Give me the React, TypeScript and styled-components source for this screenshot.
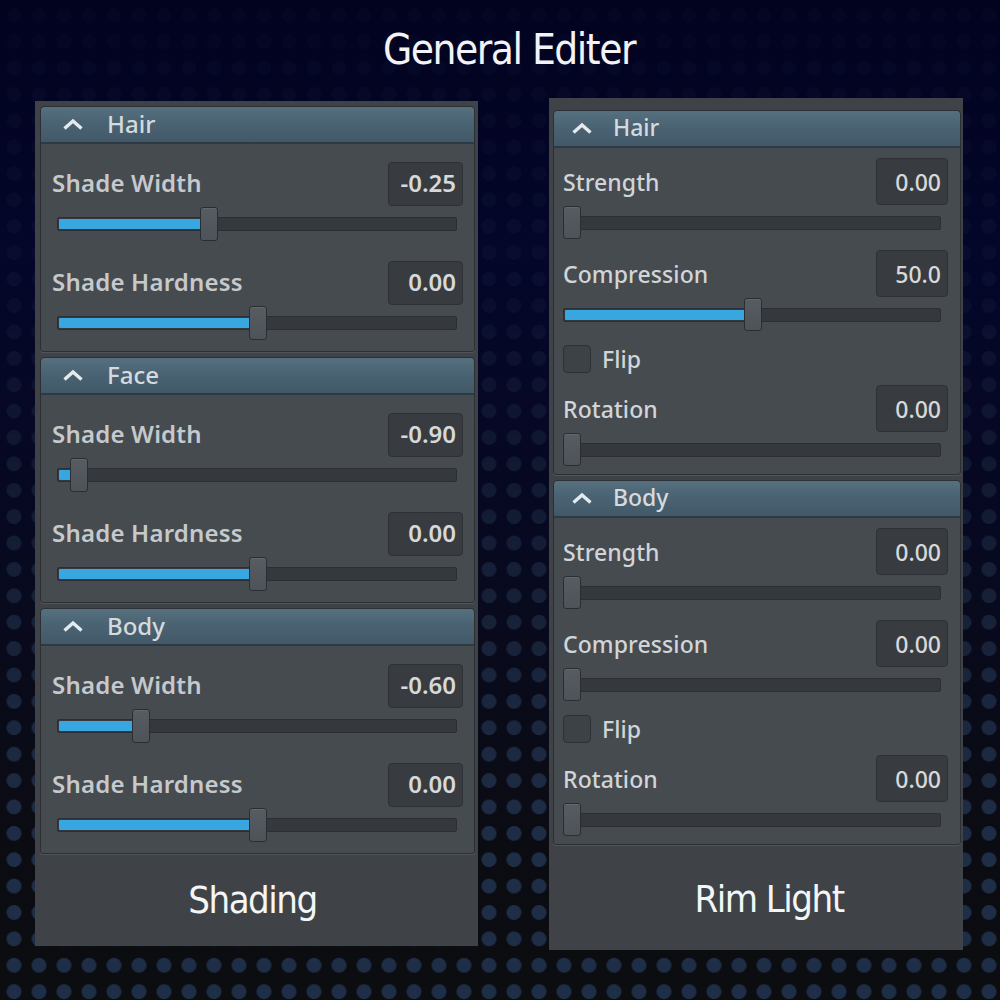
import React from "react";
import styled, { createGlobalStyle } from "styled-components";

const GlobalStyle = createGlobalStyle`
	html, body {
		margin: 0;
		padding: 0;
		background: #05061a;
	}
	* {
		box-sizing: border-box;
	}
`;

type SliderRow = { kind: "slider"; label: string; value: string; pct: number; fill: boolean };
type CheckRow = { kind: "check"; label: string };
type Row = SliderRow | CheckRow;
type Section = { title: string; rows: Row[] };

const shading: Section[] = [
	{
		title: "Hair",
		rows: [
			{ kind: "slider", label: "Shade Width", value: "-0.25", pct: 37.4, fill: true },
			{ kind: "slider", label: "Shade Hardness", value: "0.00", pct: 50.3, fill: true },
		],
	},
	{
		title: "Face",
		rows: [
			{ kind: "slider", label: "Shade Width", value: "-0.90", pct: 3.4, fill: true },
			{ kind: "slider", label: "Shade Hardness", value: "0.00", pct: 50.3, fill: true },
		],
	},
	{
		title: "Body",
		rows: [
			{ kind: "slider", label: "Shade Width", value: "-0.60", pct: 19.6, fill: true },
			{ kind: "slider", label: "Shade Hardness", value: "0.00", pct: 50.3, fill: true },
		],
	},
];

const rimLight: Section[] = [
	{
		title: "Hair",
		rows: [
			{ kind: "slider", label: "Strength", value: "0.00", pct: 0, fill: false },
			{ kind: "slider", label: "Compression", value: "50.0", pct: 50.4, fill: true },
			{ kind: "check", label: "Flip" },
			{ kind: "slider", label: "Rotation", value: "0.00", pct: 0, fill: false },
		],
	},
	{
		title: "Body",
		rows: [
			{ kind: "slider", label: "Strength", value: "0.00", pct: 0, fill: false },
			{ kind: "slider", label: "Compression", value: "0.00", pct: 0, fill: false },
			{ kind: "check", label: "Flip" },
			{ kind: "slider", label: "Rotation", value: "0.00", pct: 0, fill: false },
		],
	},
];

const Chevron = () => (
	<svg width="24" height="13" viewBox="0 0 24 13">
		<path d="M3.5 10.5 L12 3 L20.5 10.5" fill="none" stroke="#e6eaed" strokeWidth="3.4" strokeLinejoin="miter" />
	</svg>
);

interface Variant {
	$wide: boolean;
}

const SliderControl: React.FC<{ row: SliderRow; wide: boolean }> = ({ row, wide }) => (
	<RowBlock>
		<LabelLine>
			<Label $wide={wide}>{row.label}</Label>
			<ValueBox $wide={wide}>{row.value}</ValueBox>
		</LabelLine>
		<SliderArea $wide={wide}>
			<Track>
				{row.fill && <Fill style={{ width: `calc(${row.pct / 100} * (100% - 18px) + 4px)` }} />}
			</Track>
			<Handle style={{ left: `calc(${row.pct / 100} * (100% - 18px))` }} />
		</SliderArea>
	</RowBlock>
);

const PanelView: React.FC<{ sections: Section[]; footer: string; wide: boolean }> = ({ sections, footer, wide }) => (
	<Panel $wide={wide}>
		{sections.map((s, i) => (
			<Group key={i}>
				<Header $wide={wide}>
					<Chevron />
					<HeaderTitle $wide={wide}>{s.title}</HeaderTitle>
				</Header>
				<Body $wide={wide}>
					{s.rows.map((r, j) =>
						r.kind === "slider" ? (
							<SliderControl key={j} row={r} wide={wide} />
						) : (
							<CheckLine key={j}>
								<CheckBox />
								<Label $wide={wide}>{r.label}</Label>
							</CheckLine>
						)
					)}
				</Body>
			</Group>
		))}
		<Footer $wide={wide}>{footer}</Footer>
	</Panel>
);

export default function App() {
	return (
		<Page>
			<GlobalStyle />
			<Title>General Editer</Title>
			<Columns>
				<PanelView sections={shading} footer="Shading" wide={true} />
				<PanelView sections={rimLight} footer="Rim Light" wide={false} />
			</Columns>
		</Page>
	);
}

const Page = styled.div`
	position: relative;
	width: 1000px;
	height: 1000px;
	overflow: hidden;
	background: linear-gradient(180deg, #02031f 0%, #04062a 25%, #070920 55%, #0b0c12 85%, #0c0d10 100%);

	&::before {
		content: "";
		position: absolute;
		inset: 0;
		background-image: radial-gradient(circle, #1f2e47 7px, transparent 7.8px);
		background-size: 25px 26.4px;
		background-position: 1.5px 2px;
		-webkit-mask-image: linear-gradient(180deg, rgba(0, 0, 0, 0.08) 0%, rgba(0, 0, 0, 0.2) 30%, rgba(0, 0, 0, 0.65) 60%, #000 85%);
		mask-image: linear-gradient(180deg, rgba(0, 0, 0, 0.08) 0%, rgba(0, 0, 0, 0.2) 30%, rgba(0, 0, 0, 0.65) 60%, #000 85%);
	}
`;

const Title = styled.div`
	position: relative;
	height: 98px;
	display: flex;
	align-items: center;
	justify-content: center;
	padding-left: 18px;
	color: #f2f3f6;
	font-family: "DejaVu Sans Condensed", "DejaVu Sans", Roboto, sans-serif;
	font-size: 42px;
	font-weight: 400;
	letter-spacing: -1.5px;
`;

const Columns = styled.div`
	position: relative;
	display: flex;
	align-items: flex-start;
	gap: 71px;
	padding-left: 35px;
`;

const Panel = styled.div<Variant>`
	display: flex;
	flex-direction: column;
	width: ${(p) => (p.$wide ? "443px" : "414px")};
	height: ${(p) => (p.$wide ? "845px" : "852px")};
	margin-top: ${(p) => (p.$wide ? "3px" : "0")};
	padding: ${(p) => (p.$wide ? "5px 3px 0 5px" : "12px 2px 0 4px")};
	background: #3f4347;
`;

const Group = styled.div`
	display: flex;
	flex-direction: column;
	margin-bottom: 5px;
	border: 1px solid #2c3034;
	border-radius: 4px 4px 3px 3px;
	background: #464b50;
	box-shadow: 0 1px 0 #4f5459;
`;

const Header = styled.div<Variant>`
	display: flex;
	align-items: center;
	gap: ${(p) => (p.$wide ? "22px" : "19px")};
	height: 37px;
	padding-left: ${(p) => (p.$wide ? "20px" : "16px")};
	border-radius: 4px 4px 0 0;
	background: linear-gradient(180deg, #56707f 0%, #4a6373 45%, #415868 100%);
	border-bottom: 2px solid #2e3a43;
`;

const HeaderTitle = styled.span<Variant>`
	font-family: "Noto Sans", "Open Sans", sans-serif;
	font-size: ${(p) => (p.$wide ? "24px" : "23px")};
	font-weight: 500;
	color: #d6dadd;
	line-height: 1;
	padding-bottom: 2px;
`;

const Body = styled.div<Variant>`
	display: flex;
	flex-direction: column;
	gap: ${(p) => (p.$wide ? "20px" : "11px")};
	padding: ${(p) => (p.$wide ? "18px 11px 11px 11px" : "10px 12px 8px 9px")};
`;

const RowBlock = styled.div`
	display: flex;
	flex-direction: column;
	gap: 1px;
`;

const LabelLine = styled.div`
	display: flex;
	align-items: center;
	justify-content: space-between;
`;

const Label = styled.span<Variant>`
	font-family: "Noto Sans", "Open Sans", sans-serif;
	font-size: ${(p) => (p.$wide ? "24px" : "23px")};
	font-weight: ${(p) => (p.$wide ? 600 : 500)};
	color: ${(p) => (p.$wide ? "#c6c9cc" : "#d2d5d8")};
	letter-spacing: ${(p) => (p.$wide ? "0.2px" : "0.1px")};
	margin-bottom: ${(p) => (p.$wide ? "3px" : "0")};
`;

const ValueBox = styled.div<Variant>`
	width: ${(p) => (p.$wide ? "75px" : "72px")};
	height: ${(p) => (p.$wide ? "44px" : "47px")};
	display: flex;
	align-items: center;
	justify-content: flex-end;
	padding: ${(p) => (p.$wide ? "0 6px 4px 0" : "0 6px 0 0")};
	border: 1px solid #2d3135;
	border-radius: 4px;
	background: #383c40;
	font-family: "Noto Sans", "Open Sans", sans-serif;
	font-size: ${(p) => (p.$wide ? "24px" : "23px")};
	font-weight: ${(p) => (p.$wide ? 600 : 500)};
	color: #d6d8da;
`;

const SliderArea = styled.div<Variant>`
	position: relative;
	height: ${(p) => (p.$wide ? "34px" : "33px")};
	margin: ${(p) => (p.$wide ? "0 6px 0 5px" : "0 7px 0 0")};
	display: flex;
	align-items: center;
`;

const Track = styled.div`
	position: relative;
	width: 100%;
	height: 14px;
	border: 1px solid #2b2e32;
	border-radius: 2px;
	background: #35393d;
	overflow: hidden;
`;

const Fill = styled.div`
	position: absolute;
	left: 1px;
	top: 1px;
	bottom: 1px;
	background: #38a7e0;
	border-radius: 1px;
`;

const Handle = styled.div`
	position: absolute;
	top: 0;
	width: 18px;
	height: 100%;
	border: 1px solid #2a2e32;
	border-radius: 3px;
	background: linear-gradient(180deg, #565c62 0%, #4d5359 100%);
	box-shadow: inset 0 1px 0 #62686e;
`;

const CheckLine = styled.div`
	display: flex;
	align-items: center;
	gap: 11px;
	height: 29px;
	margin: 2px 0 1px;
`;

const CheckBox = styled.div`
	width: 28px;
	height: 28px;
	border: 1px solid #2d3135;
	border-radius: 4px;
	background: #3d4246;
`;

const Footer = styled.div<Variant>`
	flex: 1;
	display: flex;
	align-items: center;
	justify-content: center;
	padding: ${(p) => (p.$wide ? "0 10px 5px 0" : "0 0 2px 24px")};
	color: #f4f5f7;
	font-family: "DejaVu Sans Condensed", "DejaVu Sans", Roboto, sans-serif;
	font-size: 38px;
	font-weight: 400;
	letter-spacing: -1.5px;
`;
